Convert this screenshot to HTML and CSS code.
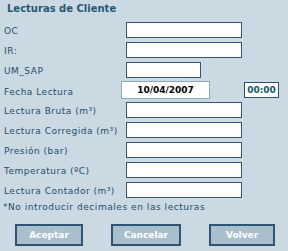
FILE: index.html
```html
<!DOCTYPE html>
<html>
   <head>
      <meta name="viewport" content="width=device-width, initial-scale=1.0"/>
      <link rel="stylesheet" href="styles.css">
   </head>
   <body>
      <div class="panel">
         <!--title-->
         <h1 class="title">Lecturas de Cliente</h1>
         <div class="row"><span class="label">OC</span><input class="field" type="text"></div>
         <div class="row"><span class="label">IR:</span><input class="field" type="text"></div>
         <div class="row"><span class="label">UM_SAP</span><input class="field short" type="text"></div>
         <!--date and time row-->
         <div class="row">
            <span class="label date-label">Fecha Lectura</span>
            <div class="datebox">10/04/2007</div>
            <div class="timebox">00:00</div>
         </div>
         <div class="row"><span class="label">Lectura Bruta (m³)</span><input class="field" type="text"></div>
         <div class="row"><span class="label">Lectura Corregida (m³)</span><input class="field" type="text"></div>
         <div class="row"><span class="label">Presión (bar)</span><input class="field" type="text"></div>
         <div class="row"><span class="label">Temperatura (ºC)</span><input class="field" type="text"></div>
         <div class="row"><span class="label">Lectura Contador (m³)</span><input class="field" type="text"></div>
         <p class="note">*No introducir decimales en las lecturas</p>
         <!--buttons-->
         <div class="buttons">
            <button class="btn aceptar">Aceptar</button>
            <button class="btn cancelar">Cancelar</button>
            <button class="btn volver">Volver</button>
         </div>
      </div>
   </body>
</html>
```

FILE: styles.css
```css
body {
margin: 0;
background-color: #cbd9e2;
font-family: "DejaVu Sans", Verdana, sans-serif;
color: #1f4e6e;
}
.panel {
width: 288px;
height: 251px;
}
.title {
margin: 0;
padding: 3px 0 0 7px;
height: 17px;
font-size: 10px;
font-weight: bold;
color: #2a5674;
}
.row {
display: flex;
align-items: flex-start;
height: 20px;
}
.label {
width: 122px;
padding: 4px 0 0 4px;
font-size: 9px;
line-height: 14px;
letter-spacing: 0.5px;
white-space: nowrap;
}
.field {
margin: 2px 0 0 0;
padding: 0;
width: 116px;
height: 16px;
box-sizing: border-box;
border: 1px solid #3a5672;
background: white;
}
.short {
width: 75px;
}
.date-label {
width: 117px;
padding-top: 5px;
}
.datebox {
margin-top: 1px;
width: 89px;
height: 18px;
box-sizing: border-box;
border: 1px solid #8eaabd;
background: white;
font-size: 9px;
font-weight: bold;
color: black;
text-align: center;
line-height: 16px;
}
.timebox {
margin: 2px 0 0 34px;
width: 35px;
height: 16px;
box-sizing: border-box;
border: 1px solid #2e4f66;
background: white;
font-size: 9px;
font-weight: bold;
color: #0e5b66;
text-align: center;
line-height: 14px;
}
.note {
margin: 0;
padding: 1px 0 0 3px;
font-size: 9px;
line-height: 12px;
letter-spacing: 0.55px;
}
.buttons {
display: flex;
gap: 28px;
padding: 11px 0 0 15px;
}
.btn {
height: 22px;
padding: 0;
border: 2px solid #2f5474;
background: #a9bfce;
color: #ffffff;
font-family: "DejaVu Sans", Verdana, sans-serif;
font-size: 9px;
font-weight: bold;
}
.aceptar {
width: 68px;
}
.cancelar {
width: 70px;
}
.volver {
width: 66px;
}
```
